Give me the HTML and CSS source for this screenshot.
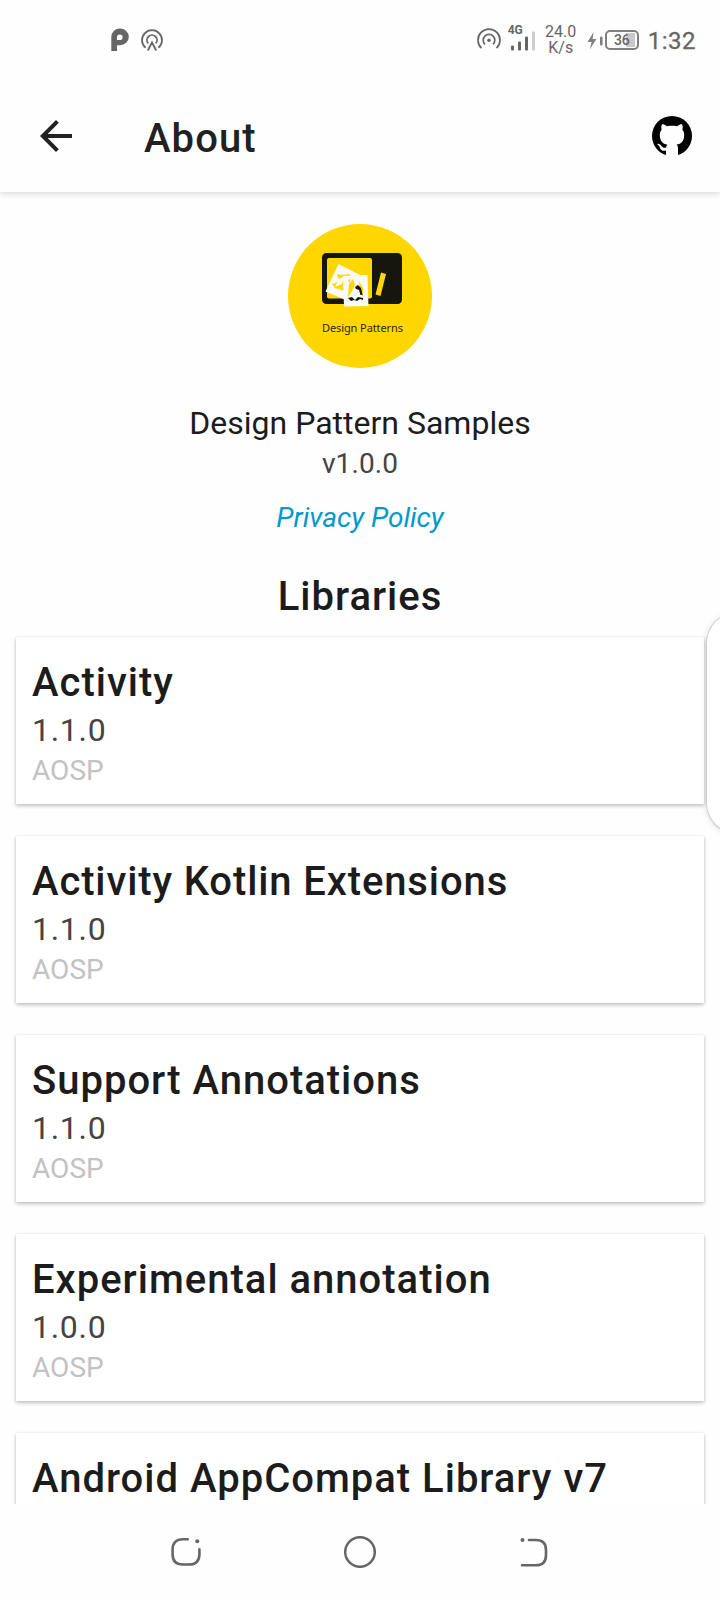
FILE: index.html
```
<!DOCTYPE html>
<html lang="en">
<head>
<meta charset="utf-8">
<title>About</title>
<link rel="stylesheet" href="styles.css">
</head>
<body>
<div class="screen">
  <div class="status">
    <div class="status-left">
      <svg width="18" height="24" viewBox="0 0 18 24"><path fill="#666" fill-rule="evenodd" d="M0.3 9a8.7 8.2 0 0 1 8.7-8.400a8.700 8.200 0 0 1 0 16.600H6V23H0.300zM6 12V9.200a2.800 2.800 0 1 1 2.800 2.800z"/></svg>
      <svg width="24" height="24" viewBox="0 0 24 24" fill="none" stroke="#666" stroke-width="1.8"><path d="M5.600 19.800A10 10 0 1 1 18.400 19.800"/><path d="M8.200 15.400A5 5 0 1 1 15.800 15.400"/><path d="M7.800 22.500L12 14.500L16.200 22.500"/></svg>
    </div>
    <div class="status-right">
      <svg class="cast" width="24" height="24" viewBox="0 0 24 24" fill="none" stroke="#666" stroke-width="1.7"><path d="M4.500 21.200A11 11 0 1 1 19.500 21.200"/><path d="M8 17.400A5.800 5.800 0 1 1 16 17.400"/><circle cx="12" cy="13.200" r="1.800" fill="#666" stroke="none"/></svg>
      <div class="signal">
        <span class="net">4G</span>
        <svg width="26" height="20" viewBox="0 0 26 20" fill="#666"><rect x="1" y="14.500" width="3" height="5" rx="1"/><rect x="8" y="10.500" width="3" height="9" rx="1"/><rect x="15" y="5.500" width="3" height="14" rx="1"/><rect x="22" y="0.500" width="3" height="19" rx="1" fill="#ccc"/></svg>
      </div>
      <div class="speed"><span>24.0</span><span>K/s</span></div>
      <svg class="bolt" width="17" height="20" viewBox="0 0 17 20"><path fill="#808080" d="M6.600 1L0.500 11H4.600L2.800 18.500L9.400 8H5.600z"/><rect x="13" y="5.500" width="2.600" height="9" rx="1.200" fill="#808080"/></svg>
      <div class="battery"><span>36</span></div>
      <div class="clock">1:32</div>
    </div>
  </div>
  <header class="bar">
    <svg width="48" height="48" viewBox="0 0 24 24" fill="#212121"><path d="M20 11H7.830l5.590-5.590L12 4l-8 8 8 8 1.410-1.410L7.830 13H20z"/></svg>
    <h1>About</h1>
    <svg class="github" width="48" height="48" viewBox="0 0 24 24"><path d="M12,2A10,10 0 0,0 2,12C2,16.42 4.87,20.17 8.84,21.5C9,21.55 9,21.4 9,21V19.31C6.53,19.81 6.04,17.97 6.04,17.97C5.68,16.81 5.03,16.5 5.03,16.5C4.12,15.88 5.1,15.9 5.1,15.9C6.1,15.97 6.63,16.93 6.63,16.93C7.4,18.15 8.5,18 9.04,17.76C9.1,17.11 9.39,16.67 9.7,16.32C7.95,16.07 5.9,15.01 5.9,11.5C5.9,10.39 6.2,9.5 6.85,8.79C6.75,8.54 6.4,7.5 6.95,6.15C6.95,6.15 7.79,5.88 9.5,7.17C11,6.84 13,6.84 14.5,7.17C16.21,5.88 17.05,6.15 17.05,6.15C17.6,7.5 17.25,8.54 17.15,8.79C17.8,9.5 18.1,10.39 18.1,11.5C18.1,15.02 16.04,16.06 14.31,16.31C14.67,16.62 15,17.33 15,18.26V21C15,21.4 15,21.55 15.17,21.5C19.14,20.16 22,16.42 22,12A10,10 0 0,0 12,2Z"/></svg>
  </header>
  <main class="content">
    <svg class="logo" width="144" height="144" viewBox="0 0 144 144">
      <circle cx="72" cy="72" r="72" fill="#ffd600"/>
      <rect x="34" y="29" width="80" height="51" rx="4.5" fill="#17160c"/>
      <rect x="39" y="34" width="45" height="40.500" rx="2" fill="#ffd600"/>
      <path d="M93 48.500L98 50L92.500 72L87.500 70.500z" fill="#ffd600"/>
      <path d="M50.500 40L72 51L60 77L37.500 67.500z" fill="#fafafa"/>
      <path d="M49 50L54 51L61 50L65 54L62 57L63 64L57 67L47 64L44 60L48 59L51 56z" fill="#ffd600"/>
      <path d="M51 55L56 52L54 60L47 63zM57 55L62 54L60 62L55 64z" fill="#fafafa"/>
      <path d="M55 52L79.500 51L80.500 82L56 82.500z" fill="#fafafa"/>
      <path d="M61 60L65 55L67 61L63 69L60 73zM71 57L75 64L75 73L72 68zM60 56L63 55L61 59z" fill="#ffd600"/>
      <path d="M67 63L70 61L73 64L74.500 71L72.500 71L71 66L68 65zM60 74L64 73L67 76L70 73L75 74L75 76L72 75L69 77L66 76L63 77z" fill="#17160c"/>
      <text x="34" y="107.500" textLength="81" class="logo-text">Design Patterns</text>
    </svg>
    <div class="app-name">Design Pattern Samples</div>
    <div class="app-version">v1.0.0</div>
    <a class="privacy">Privacy Policy</a>
    <h2>Libraries</h2>
    <div class="list">
      <section class="card"><h3>Activity</h3><p class="ver">1.1.0</p><p class="org">AOSP</p></section>
      <section class="card"><h3 class="tight">Activity Kotlin Extensions</h3><p class="ver">1.1.0</p><p class="org">AOSP</p></section>
      <section class="card"><h3>Support Annotations</h3><p class="ver">1.1.0</p><p class="org">AOSP</p></section>
      <section class="card"><h3>Experimental annotation</h3><p class="ver">1.0.0</p><p class="org">AOSP</p></section>
      <section class="card"><h3>Android AppCompat Library v7</h3></section>
    </div>
  </main>
  <nav class="nav">
    <svg width="32" height="32" viewBox="0 0 32 32" fill="none" stroke="#666" stroke-width="2.600" stroke-linecap="round"><path d="M17.700 3.300H13Q2.600 3.300 2.600 13.500V18.500Q2.600 28.500 13 28.500H19Q29.400 28.500 29.400 18.500V13.300"/><circle cx="27.300" cy="5.200" r="2" fill="#666" stroke="none"/></svg>
    <svg width="32" height="32" viewBox="0 0 32 32" fill="none" stroke="#666" stroke-width="2.500"><circle cx="16" cy="16" r="14.800"/></svg>
    <svg width="32" height="32" viewBox="0 0 32 32" fill="none" stroke="#666" stroke-width="2.600" stroke-linecap="round"><path d="M11 4H18Q28 4 28 14V19Q28 29.300 18 29.300H4"/><circle cx="4.500" cy="4" r="2" fill="#666" stroke="none"/></svg>
  </nav>
  <div class="edge-panel"></div>
</div>
</body>
</html>
```
FILE: styles.css
```
* { box-sizing: border-box; margin: 0; padding: 0; }
body { background: #fefefe; font-family: Roboto, sans-serif; color: #1c1c1c; }
.screen { position: relative; width: 720px; height: 1600px; overflow: hidden; display: flex; flex-direction: column; }
svg { display: block; flex: none; }

.status { height: 80px; flex: none; display: flex; justify-content: space-between; padding: 0 24px 0 111px; color: #666; }
.status-left { display: flex; gap: 11px; padding-top: 28px; }
.status-right { display: flex; padding-top: 24px; }
.cast { margin-top: 3px; }
.signal { margin-left: 8px; width: 28px; display: flex; flex-direction: column; padding-left: 1px; }
.net { font: 700 12px/12px Roboto, sans-serif; height: 7px; margin-left: -2px; }
.speed { width: 40px; margin-left: 4px; display: flex; flex-direction: column; align-items: center; font-size: 16px; line-height: 16px; }
.bolt { margin: 7px 0 0 6px; }
.battery { width: 34px; height: 20px; margin: 6px 0 0 1px; border: 2px solid #808080; border-radius: 5px; background: linear-gradient(#c8c8c8, #c8c8c8) 19px 1px / 9px 14px no-repeat; font-size: 14px; font-weight: 500; line-height: 16px; text-align: center; letter-spacing: -0.3px; }
.clock { margin-left: 9px; font-size: 24px; line-height: 34px; font-weight: 400; letter-spacing: 0.5px; -webkit-text-stroke: 0.3px #666; }

.bar { position: relative; height: 112px; flex: none; display: flex; align-items: center; padding: 0 24px 0 32px; background: #fefefe; box-shadow: 0 2px 6px rgba(0, 0, 0, 0.15); clip-path: inset(0 0 -12px 0); }
.bar h1 { margin: 5px 0 0 64px; font-size: 40px; line-height: 47px; font-weight: 500; letter-spacing: 1.1px; color: #212121; }
.github { margin-left: auto; }

.content { flex: 1; min-height: 0; overflow: hidden; display: flex; flex-direction: column; align-items: center; padding-top: 32px; }
.logo-text { font: 11px "Noto Sans", sans-serif; fill: #2b2608; }
.app-name { margin-top: 36px; font-size: 32px; line-height: 38px; }
.app-version { margin-top: 5px; font-size: 28px; line-height: 33px; letter-spacing: 0.1px; color: #444; }
.privacy { margin-top: 21px; font-size: 28px; line-height: 33px; font-style: italic; color: #0099cc; }
.content h2 { margin-top: 39px; font-size: 40px; line-height: 47px; font-weight: 500; letter-spacing: 1px; }

.list { align-self: stretch; display: flex; flex-direction: column; gap: 32px; padding: 17px 16px 0; }
.card { height: 167px; flex: none; display: flex; flex-direction: column; gap: 5px; padding: 22px 16px 17px; background: #fff; box-shadow: 0 2px 4px rgba(0, 0, 0, 0.24), 0 0 2px rgba(0, 0, 0, 0.08); }
.card h3 { font-size: 40px; line-height: 47px; font-weight: 500; letter-spacing: 1px; white-space: nowrap; }
.card .tight { letter-spacing: 0.88px; }
.ver { font-size: 32px; line-height: 38px; letter-spacing: 0.7px; color: #444; }
.org { font-size: 28px; line-height: 33px; color: #c2c2c2; }

.nav { height: 96px; flex: none; display: flex; justify-content: space-between; align-items: center; padding: 0 170px; background: #fefefe; }
/* Drawer handle floating over the right edge */
.edge-panel { position: absolute; left: 707px; top: 613px; width: 60px; height: 220px; border-radius: 32px; background: #fff; box-shadow: 0 0 1px 1px rgba(0, 0, 0, 0.12), 0 1px 6px rgba(0, 0, 0, 0.18); }
```
